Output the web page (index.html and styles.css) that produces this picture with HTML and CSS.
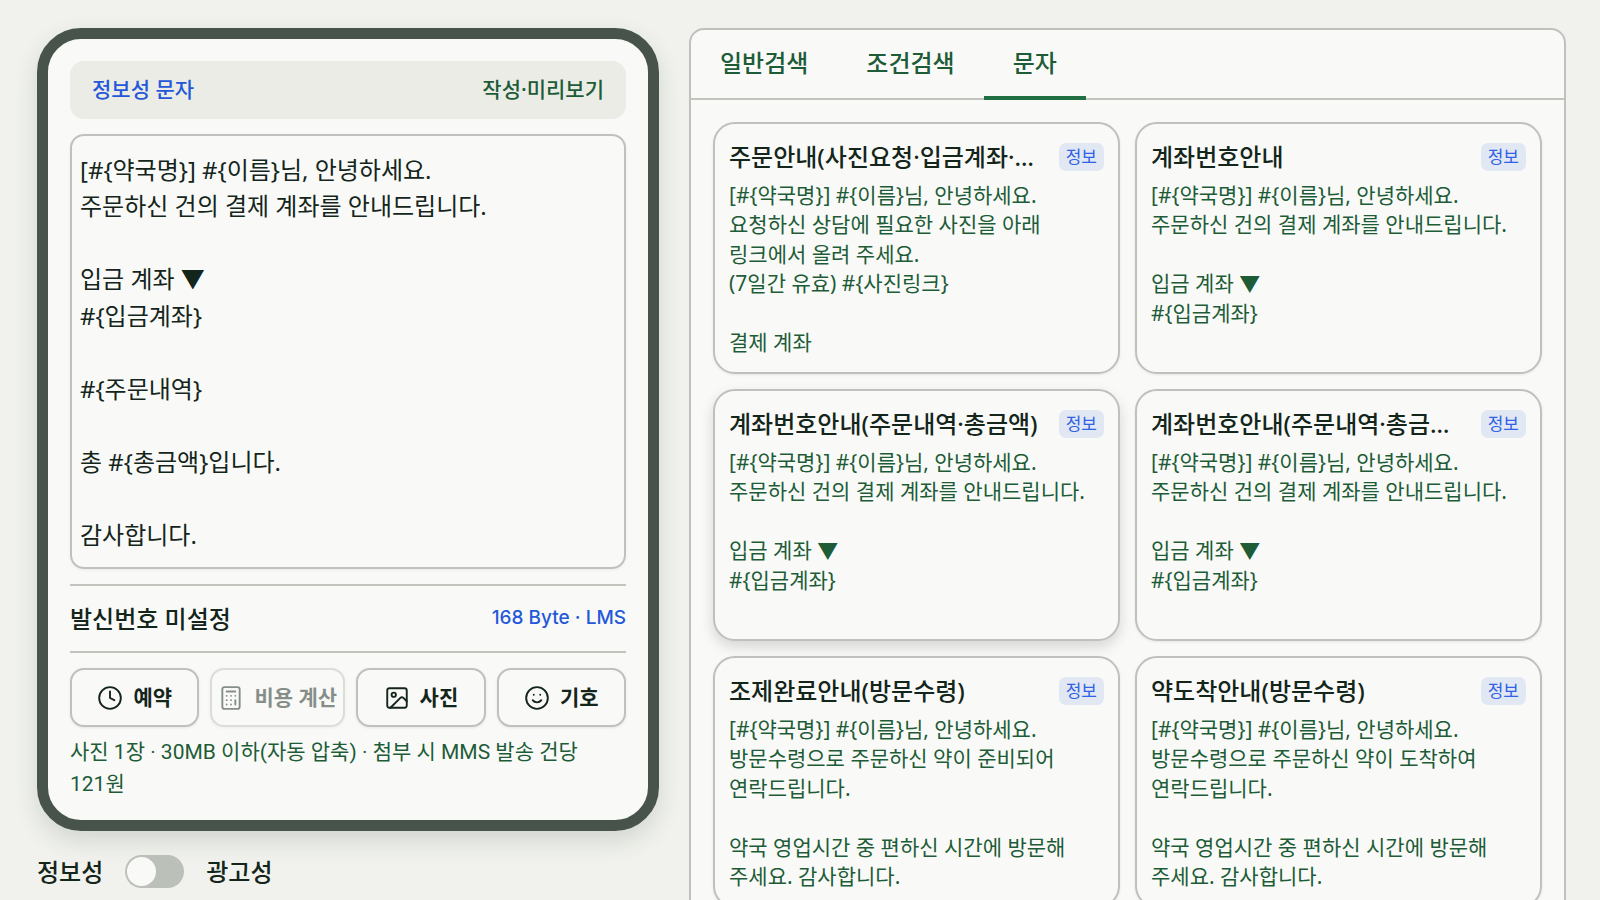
FILE: index.html
```
<!DOCTYPE html>
<html lang="ko">
<head>
    <meta charset="UTF-8" />
    <meta name="viewport" content="width=device-width, initial-scale=1.0" />
    <title>문자 발송</title>
    <link rel="stylesheet" href="styles.css">
</head>
<body>
    <main class="layout">
        <section class="composer">
            <div class="phone">
                <header class="phone-header">
                    <span class="msg-type">정보성 문자</span>
                    <label for="message">작성·미리보기</label>
                </header>
                <textarea id="message" class="message" rows="11" spellcheck="false">[#{약국명}] #{이름}님, 안녕하세요.
주문하신 건의 결제 계좌를 안내드립니다.

입금 계좌 ▼
#{입금계좌}

#{주문내역}

총 #{총금액}입니다.

감사합니다.</textarea>
                <div class="sender">
                    <span>발신번호 미설정</span>
                    <span class="bytes">168 Byte · LMS</span>
                </div>
                <div class="tools">
                    <button type="button" class="tool">
                        <svg class="icon" viewBox="0 0 24 24"><circle cx="12" cy="12" r="10"/><path d="M12 6v6l4 2"/></svg>
                        예약
                    </button>
                    <button type="button" class="tool" disabled>
                        <svg class="icon" viewBox="0 0 24 24"><rect x="4" y="2" width="16" height="20" rx="2"/><path d="M8 6h8M16 14v4M16 10h.01M12 10h.01M8 10h.01M12 14h.01M8 14h.01M12 18h.01M8 18h.01"/></svg>
                        비용 계산
                    </button>
                    <button type="button" class="tool">
                        <svg class="icon" viewBox="0 0 24 24"><rect x="3" y="3" width="18" height="18" rx="2"/><circle cx="9" cy="9" r="2"/><path d="m21 15-3.086-3.086a2 2 0 0 0-2.828 0L6 21"/></svg>
                        사진
                    </button>
                    <button type="button" class="tool">
                        <svg class="icon" viewBox="0 0 24 24"><circle cx="12" cy="12" r="10"/><path d="M8 14s1.5 2 4 2 4-2 4-2M9 9h.01M15 9h.01"/></svg>
                        기호
                    </button>
                </div>
                <p class="hint">사진 1장 · 30MB 이하(자동 압축) · 첨부 시 MMS 발송 건당 121원</p>
            </div>
            <div class="kind">
                <span>정보성</span>
                <input type="checkbox" role="switch" id="kind" class="switch" />
                <label for="kind">광고성</label>
            </div>
        </section>

        <section class="panel">
            <nav class="tabs">
                <button type="button" class="tab">일반검색</button>
                <button type="button" class="tab">조건검색</button>
                <button type="button" class="tab active">문자</button>
            </nav>
            <div class="templates">
                <button type="button" class="card">
                    <span class="card-head"><span class="card-title">주문안내(사진요청·입금계좌·총금액)</span><span class="badge">정보</span></span>
                    <span class="card-body">[#{약국명}] #{이름}님, 안녕하세요.
요청하신 상담에 필요한 사진을 아래 링크에서 올려 주세요.
(7일간 유효) #{사진링크}

결제 계좌</span>
                </button>
                <button type="button" class="card">
                    <span class="card-head"><span class="card-title">계좌번호안내</span><span class="badge">정보</span></span>
                    <span class="card-body">[#{약국명}] #{이름}님, 안녕하세요.
주문하신 건의 결제 계좌를 안내드립니다.

입금 계좌 ▼
#{입금계좌}</span>
                </button>
                <button type="button" class="card raised">
                    <span class="card-head"><span class="card-title">계좌번호안내(주문내역·총금액)</span><span class="badge">정보</span></span>
                    <span class="card-body">[#{약국명}] #{이름}님, 안녕하세요.
주문하신 건의 결제 계좌를 안내드립니다.

입금 계좌 ▼
#{입금계좌}</span>
                </button>
                <button type="button" class="card">
                    <span class="card-head"><span class="card-title">계좌번호안내(주문내역·총금액·배송)</span><span class="badge">정보</span></span>
                    <span class="card-body">[#{약국명}] #{이름}님, 안녕하세요.
주문하신 건의 결제 계좌를 안내드립니다.

입금 계좌 ▼
#{입금계좌}</span>
                </button>
                <button type="button" class="card">
                    <span class="card-head"><span class="card-title">조제완료안내(방문수령)</span><span class="badge">정보</span></span>
                    <span class="card-body">[#{약국명}] #{이름}님, 안녕하세요.
방문수령으로 주문하신 약이 준비되어 연락드립니다.

약국 영업시간 중 편하신 시간에 방문해 주세요. 감사합니다.</span>
                </button>
                <button type="button" class="card">
                    <span class="card-head"><span class="card-title">약도착안내(방문수령)</span><span class="badge">정보</span></span>
                    <span class="card-body">[#{약국명}] #{이름}님, 안녕하세요.
방문수령으로 주문하신 약이 도착하여 연락드립니다.

약국 영업시간 중 편하신 시간에 방문해 주세요. 감사합니다.</span>
                </button>
            </div>
        </section>
    </main>
</body>
</html>
```
FILE: styles.css
```
* {
    box-sizing: border-box;
}
body {
    margin: 0;
    background: #f1f2ed;
    color: #14251b;
    font-family: "Noto Sans", "Noto Sans CJK KR", sans-serif;
    font-size: 24px;
    line-height: 1.4;
    word-break: keep-all;
}
button, textarea {
    font: inherit;
    color: inherit;
}
button {
    cursor: pointer;
}
.layout {
    display: grid;
    grid-template-columns: 622fr 877fr;
    gap: 30px;
    align-items: start;
    padding: 28px 34px 28px 37px;
}
.phone {
    display: flex;
    flex-direction: column;
    padding: 22px 22px 20px;
    border: 11px solid #48544b;
    border-radius: 44px;
    background: #f9faf7;
    box-shadow: 0 10px 24px rgba(30, 50, 38, 0.14);
}
.phone-header {
    display: flex;
    align-items: center;
    justify-content: space-between;
    height: 58px;
    padding: 0 22px;
    border-radius: 14px;
    background: #ebece6;
    color: #1d5c37;
    font-size: 21px;
    font-weight: 500;
}
.msg-type, .bytes {
    color: #2558d9;
}
.message {
    width: 100%;
    margin-top: 15px;
    padding: 16px 8px 14px;
    border: 2px solid #bfc1bc;
    border-radius: 14px;
    background: transparent;
    box-shadow: 0 1px 3px rgba(0, 0, 0, 0.06);
    line-height: 1.52;
    resize: none;
    overflow: hidden;
    outline: none;
}
.sender {
    display: flex;
    align-items: center;
    justify-content: space-between;
    height: 69px;
    margin-top: 15px;
    border-top: 2px solid #c2c4be;
    border-bottom: 2px solid #c2c4be;
    font-weight: 500;
}
.bytes {
    font-family: Inter, "Noto Sans CJK KR", sans-serif;
    font-size: 19px;
}
.tools {
    display: flex;
    gap: 11px;
    margin-top: 15px;
}
.tool {
    flex: 1;
    display: flex;
    align-items: center;
    justify-content: center;
    gap: 10px;
    height: 59px;
    padding: 0 6px;
    border: 2px solid #bfc1bc;
    border-radius: 14px;
    background: #f9faf7;
    box-shadow: 0 1px 3px rgba(0, 0, 0, 0.08);
    font-size: 21px;
    font-weight: 600;
    white-space: nowrap;
}
.tool:disabled {
    opacity: 0.5;
    cursor: default;
}
.icon {
    flex: none;
    width: 26px;
    height: 26px;
    fill: none;
    stroke: currentColor;
    stroke-width: 1.75;
    stroke-linecap: round;
    stroke-linejoin: round;
}
.hint {
    margin: 10px 0 0;
    color: #1d5c37;
    font-family: Roboto, "Noto Sans CJK KR", sans-serif;
    font-size: 21px;
    line-height: 1.5;
}
.kind {
    display: flex;
    align-items: center;
    gap: 22px;
    height: 33px;
    margin-top: 24px;
    font-weight: 500;
}
.switch {
    appearance: none;
    width: 59px;
    height: 33px;
    margin: 0;
    padding: 2px;
    border-radius: 17px;
    background: #bbc0b9;
    cursor: pointer;
}
.switch::before {
    content: "";
    display: block;
    width: 29px;
    height: 29px;
    border-radius: 50%;
    background: #f9faf7;
}
.switch:checked {
    background: #216e43;
}
.switch:checked::before {
    margin-left: auto;
}
.panel {
    min-width: 0;
    border: 2px solid #bfc1bc;
    border-radius: 15px;
    background: #f9faf7;
}
.tabs {
    display: flex;
    border-bottom: 2px solid #c2c4be;
}
.tab {
    height: 70px;
    margin-bottom: -2px;
    padding: 0 29px;
    border: 0;
    border-bottom: 4px solid transparent;
    background: none;
    color: #1d5c37;
    font-weight: 500;
}
.tab.active {
    border-bottom-color: #216e43;
}
.templates {
    display: grid;
    grid-template-columns: repeat(2, minmax(0, 1fr));
    gap: 15px;
    padding: 22px;
}
.card {
    display: flex;
    flex-direction: column;
    gap: 5px;
    padding: 14px;
    border: 2px solid #bfc1bc;
    border-radius: 22px;
    background: #f9faf7;
    box-shadow: 0 1px 3px rgba(0, 0, 0, 0.08);
    text-align: left;
}
.card.raised {
    box-shadow: 0 6px 14px rgba(0, 0, 0, 0.14);
}
.card-head {
    display: flex;
    align-items: center;
    justify-content: space-between;
    gap: 14px;
    width: 100%;
    line-height: 38px;
}
.card-title {
    overflow: hidden;
    text-overflow: ellipsis;
    white-space: nowrap;
    font-weight: 500;
}
.badge {
    flex: none;
    padding: 0 7px;
    border-radius: 7px;
    background: #e2e7f4;
    color: #2f62e4;
    font-size: 17px;
    line-height: 28px;
}
.card-body {
    width: 100%;
    height: 177px;
    overflow: hidden;
    color: #1d5c37;
    font-size: 21px;
    line-height: 1.4;
    white-space: pre-line;
}
```
